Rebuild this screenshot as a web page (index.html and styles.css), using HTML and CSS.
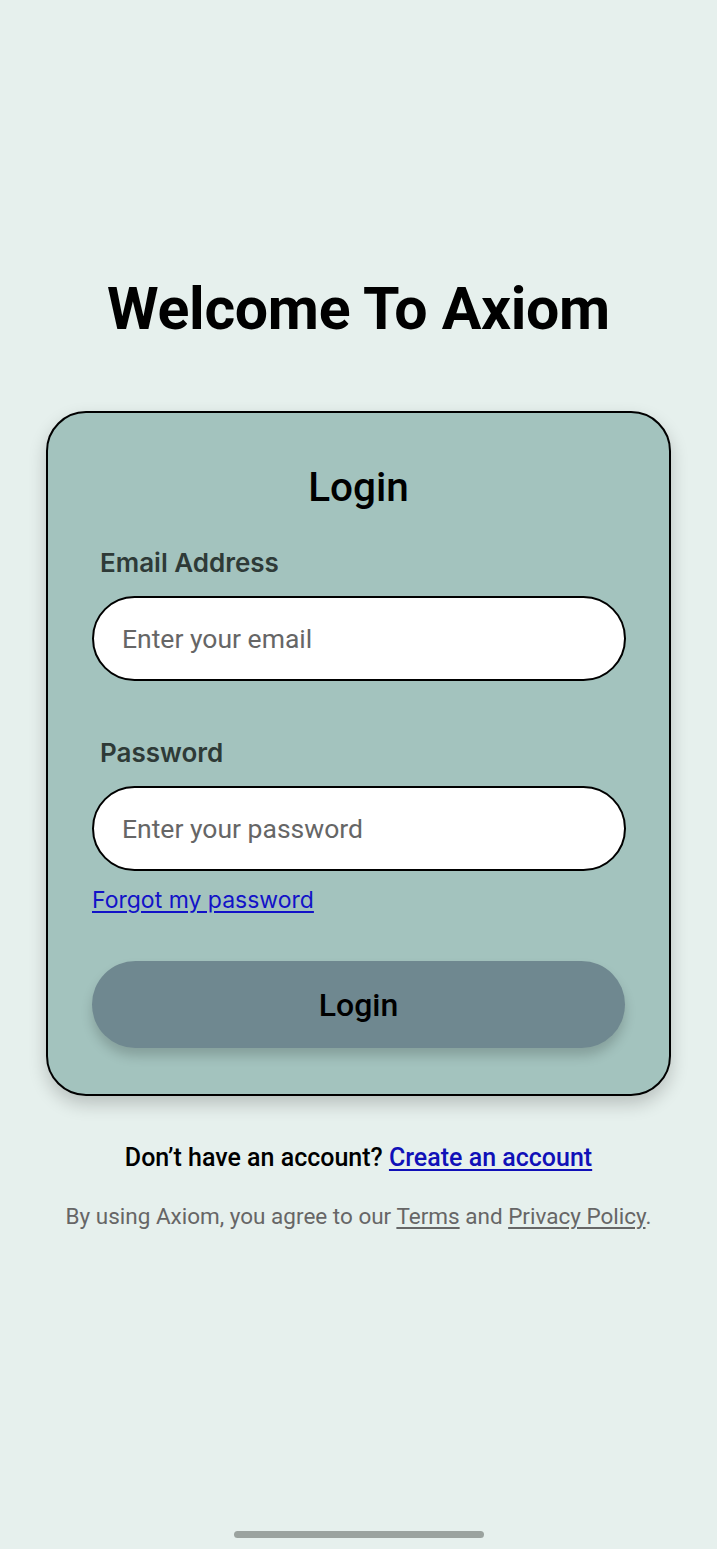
FILE: index.html
```html
<!DOCTYPE html>
<html lang="en">
<head>
<meta charset="utf-8">
<title>Welcome To Axiom</title>
<link rel="stylesheet" href="styles.css">
</head>
<body>
<main class="page">
  <h1 class="title">Welcome To Axiom</h1>
  <section class="card">
    <h2 class="card-title">Login</h2>
    <div class="field">
      <label class="label" for="email">Email Address</label>
      <input class="input" id="email" type="email" placeholder="Enter your email">
    </div>
    <div class="field field-pw">
      <label class="label" for="pw">Password</label>
      <input class="input" id="pw" type="password" placeholder="Enter your password">
    </div>
    <a class="forgot" href="#">Forgot my password</a>
    <button class="btn" type="button">Login</button>
  </section>
  <p class="signup">Don’t have an account? <a class="signup-link" href="#">Create an account</a></p>
  <p class="terms">By using Axiom, you agree to our <a href="#">Terms</a> and <a href="#">Privacy Policy</a>.</p>
</main>
<div class="home-bar"></div>
</body>
</html>
```

FILE: styles.css
```css
* { box-sizing: border-box; }
html, body {
  margin: 0;
  padding: 0;
  background: #e6f0ed;
  height: 1549px;
  overflow: hidden;
}
body {
  font-family: Roboto, "Liberation Sans", sans-serif;
  position: relative;
}
.page {
  display: flex;
  flex-direction: column;
  align-items: center;
  padding-top: 273px;
}
.title {
  margin: 0;
  font-family: Roboto, sans-serif;
  font-weight: 700;
  font-size: 59px;
  line-height: 72px;
  color: #000;
  letter-spacing: -0.3px;
}
.card {
  margin-top: 66px;
  width: 625px;
  background: #a3c3be;
  border: 2px solid #000;
  border-radius: 40px;
  box-shadow: 0 8px 18px rgba(0,0,0,0.2);
  padding: 50px 44px 46px 44px;
  display: flex;
  flex-direction: column;
}
.card-title {
  margin: 0;
  text-align: center;
  font-family: Roboto, sans-serif;
  font-weight: 500;
  font-size: 40.5px;
  line-height: 48px;
  color: #000;
}
.field {
  display: flex;
  flex-direction: column;
  margin-top: 36px;
}
.field-pw { margin-top: 56px; }
.label {
  font-family: Inter, sans-serif;
  font-weight: 600;
  font-size: 26px;
  line-height: 32px;
  color: #2e3a37;
  padding-left: 8px;
  margin-bottom: 17px;
}
.input {
  height: 85px;
  width: 534px;
  border: 2px solid #000;
  border-radius: 43px;
  background: #fff;
  padding: 0 28px;
  font-family: Roboto, sans-serif;
  font-size: 26.5px;
  color: #333;
  outline: none;
}
.input::placeholder { color: #666; }
.forgot {
  align-self: flex-start;
  margin-top: 14px;
  font-family: Inter, sans-serif;
  font-size: 23px;
  line-height: 30px;
  color: #1212c8;
  text-decoration: underline;
  text-underline-offset: 3px;
}
.btn {
  margin-top: 46px;
  width: 533px;
  height: 87px;
  border: none;
  border-radius: 44px;
  background: #6f8890;
  box-shadow: 0 8px 12px rgba(0,0,0,0.18);
  font-family: Roboto, sans-serif;
  font-weight: 500;
  font-size: 32px;
  color: #000;
}
.signup {
  margin: 46px 0 0 0;
  font-family: Roboto, sans-serif;
  font-weight: 500;
  font-size: 25px;
  line-height: 32px;
  color: #000;
}
.signup-link {
  color: #1010b8;
  text-decoration: underline;
  text-underline-offset: 3px;
}
.terms {
  margin: 26px 0 0 0;
  font-family: Roboto, sans-serif;
  font-size: 22.5px;
  line-height: 32px;
  color: #666;
}
.terms a {
  color: #666;
  text-decoration: underline;
  text-underline-offset: 3px;
}
.home-bar {
  position: absolute;
  left: 234px;
  top: 1531px;
  width: 250px;
  height: 7px;
  border-radius: 4px;
  background: #9ba39f;
}
```
